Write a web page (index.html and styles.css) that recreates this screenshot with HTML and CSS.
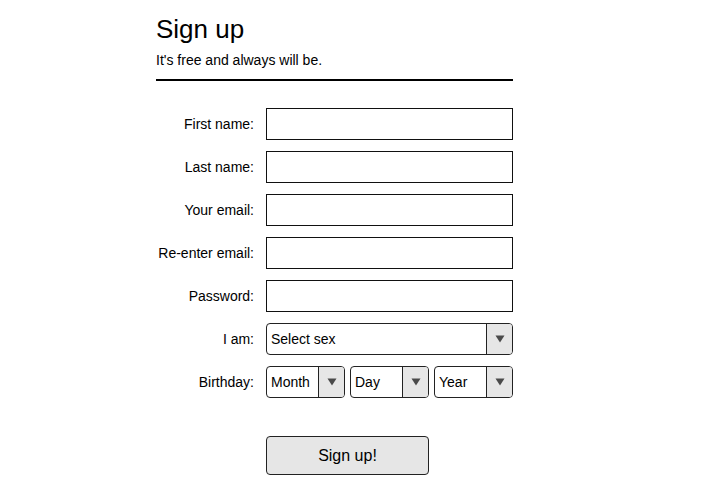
FILE: index.html
```html
<!DOCTYPE html>
<html>
<head>
<meta charset="utf-8">
<link rel="stylesheet" href="styles.css">
</head>
<body>
<div class="page">
  <header class="head">
    <h1 class="title">Sign up</h1>
    <p class="sub">It's free and always will be.</p>
  </header>
  <form class="form">
    <label class="lbl">First name:</label>
    <div class="input"></div>
    <label class="lbl">Last name:</label>
    <div class="input"></div>
    <label class="lbl">Your email:</label>
    <div class="input"></div>
    <label class="lbl">Re-enter email:</label>
    <div class="input"></div>
    <label class="lbl">Password:</label>
    <div class="input"></div>
    <label class="lbl">I am:</label>
    <div class="select"><span class="sel-text">Select sex</span><span class="arrow"><svg width="10" height="8" viewBox="0 0 10 8"><path d="M0.5 0.5 H9.5 L5 7.5 Z" fill="#4a4a4a"/></svg></span></div>
    <label class="lbl">Birthday:</label>
    <div class="bday">
      <div class="select"><span class="sel-text">Month</span><span class="arrow"><svg width="10" height="8" viewBox="0 0 10 8"><path d="M0.5 0.5 H9.5 L5 7.5 Z" fill="#4a4a4a"/></svg></span></div>
      <div class="select"><span class="sel-text">Day</span><span class="arrow"><svg width="10" height="8" viewBox="0 0 10 8"><path d="M0.5 0.5 H9.5 L5 7.5 Z" fill="#4a4a4a"/></svg></span></div>
      <div class="select"><span class="sel-text">Year</span><span class="arrow"><svg width="10" height="8" viewBox="0 0 10 8"><path d="M0.5 0.5 H9.5 L5 7.5 Z" fill="#4a4a4a"/></svg></span></div>
    </div>
    <div class="btn-row"><div class="btn">Sign up!</div></div>
  </form>
</div>
</body>
</html>
```
FILE: styles.css
```css
html, body {
  margin: 0;
  padding: 0;
  background: #fff;
}
body {
  font-family: "Liberation Sans", Arial, Helvetica, sans-serif;
  color: #000;
}
.page {
  padding-left: 156px;
  width: 357px;
}
.head {
  border-bottom: 2px solid #000;
  padding-bottom: 11px;
}
.title {
  margin: 14px 0 0;
  font-size: 26px;
  font-weight: normal;
  line-height: 30px;
}
.sub {
  margin: 8px 0 0;
  font-size: 14px;
  line-height: 16px;
}
.form {
  margin-top: 27px;
  display: grid;
  grid-template-columns: 98px 247px;
  grid-template-rows: repeat(7, 32px) auto;
  column-gap: 12px;
  row-gap: 11px;
  align-items: center;
}
.lbl {
  text-align: right;
  font-size: 14px;
  white-space: nowrap;
}
.input {
  box-sizing: border-box;
  height: 32px;
  border: 1px solid #111;
  background: #fff;
}
.select {
  box-sizing: border-box;
  height: 32px;
  border: 1px solid #222;
  border-radius: 4px;
  display: flex;
  align-items: stretch;
  overflow: hidden;
  background: #fff;
}
.sel-text {
  flex: 1;
  display: flex;
  align-items: center;
  padding-left: 4px;
  font-size: 14px;
}
.arrow {
  width: 25px;
  border-left: 1px solid #222;
  background: #e6e6e6;
  display: flex;
  align-items: center;
  justify-content: center;
}
.arrow svg {
  display: block;
}
.bday {
  display: flex;
  gap: 5px;
}
.bday .select {
  flex: 1;
}
.btn-row {
  grid-column: 2;
  margin-top: 27px;
}
.btn {
  box-sizing: border-box;
  width: 163px;
  height: 39px;
  border: 1px solid #222;
  border-radius: 4px;
  background: #e6e6e6;
  display: flex;
  align-items: center;
  justify-content: center;
  font-size: 16px;
}
```
